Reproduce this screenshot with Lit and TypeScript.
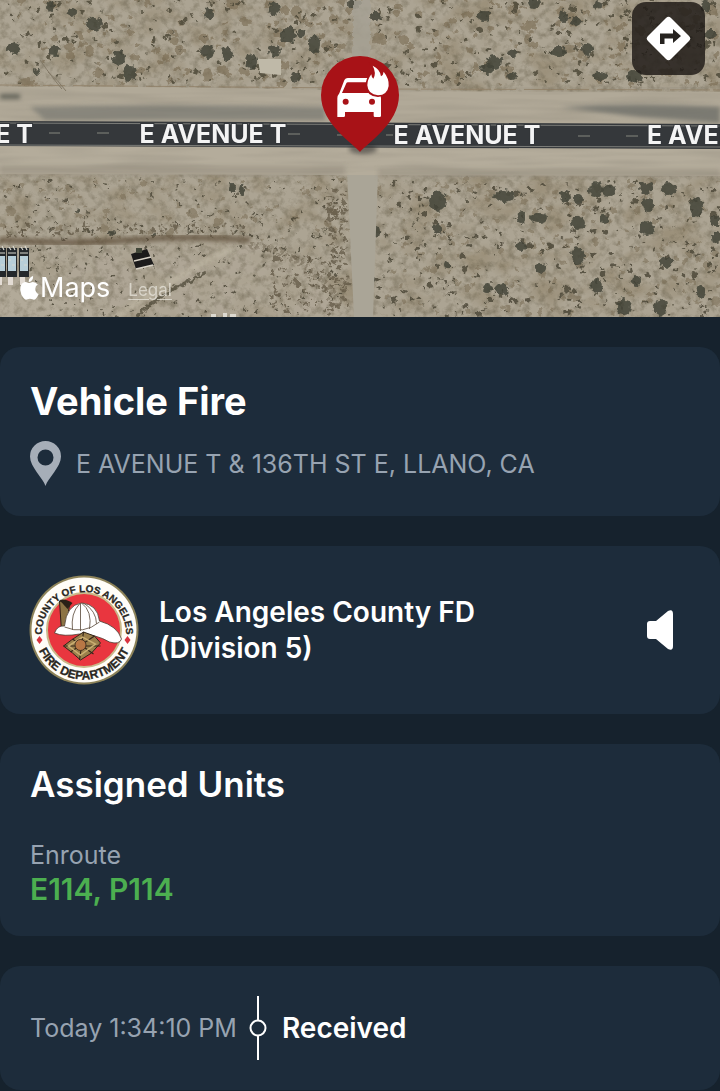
import { LitElement, html, svg, css } from "lit";
import { customElement, property } from "lit/decorators.js";

/** Small deterministic generator, so that the terrain is the same on every load. */
function seeded(seed: number) {
  let s = seed;
  return () => {
    s = (s * 1664525 + 1013904223) % 4294967296;
    return s / 4294967296;
  };
}

type Area = [x: number, y: number, w: number, h: number];

/** One path holding many little irregular blobs scattered over an area. */
function scatter(seed: number, count: number, [x, y, w, h]: Area, min: number, max: number) {
  const rnd = seeded(seed);
  let d = "";
  for (let i = 0; i < count; i++) {
    const px = x + rnd() * w;
    const py = y + rnd() * h;
    const r = min + rnd() * rnd() * (max - min);
    const k = 0.6 + rnd() * 0.5;
    d += `M${(px - r).toFixed(1)} ${py.toFixed(1)}q${(r * 0.2).toFixed(1)} ${(-r * k).toFixed(1)} ${r.toFixed(1)} ${(-r * k).toFixed(1)}t${r.toFixed(1)} ${(r * k).toFixed(1)}q${(-r * 0.3).toFixed(1)} ${(r * k).toFixed(1)} ${(-r).toFixed(1)} ${(r * k * 0.9).toFixed(1)}t${(-r).toFixed(1)} ${(-r * k * 0.9).toFixed(1)}z`;
  }
  return d;
}

const NORTH_WEST: Area = [0, 0, 350, 84];
const NORTH_EAST: Area = [372, 0, 348, 86];
const SOUTH_WEST: Area = [0, 178, 348, 62];
const YARD: Area = [30, 245, 310, 72];
const SOUTH_EAST: Area = [374, 180, 346, 137];

/* x, y, rx, ry of the large bushes */
const BUSHES = [
  [50, 6, 4, 5], [72, 12, 5, 5], [94, 24, 8, 7], [14, 48, 7, 6], [54, 51, 6, 5], [119, 58, 6, 7], [130, 73, 7, 8],
  [209, 14, 5, 6], [208, 52, 6, 7], [227, 54, 6, 7], [274, 9, 6, 7], [288, 35, 8, 8], [301, 33, 4, 4], [314, 44, 6, 10],
  [275, 51, 6, 5], [252, 62, 6, 8], [354, 4, 6, 5], [296, 77, 5, 5], [37, 71, 3, 3], [376, 16, 5, 5], [484, 16, 6, 5],
  [534, 3, 6, 5], [564, 16, 5, 6], [576, 21, 5, 5], [587, 49, 6, 6], [494, 62, 8, 7], [487, 69, 7, 5], [513, 53, 5, 4],
  [558, 52, 8, 5], [600, 76, 8, 4], [634, 76, 8, 6], [598, 5, 4, 4], [710, 34, 6, 5], [512, 76, 5, 4], [706, 6, 5, 6],
  [438, 201, 9, 10], [504, 196, 10, 6], [565, 197, 5, 6], [578, 199, 5, 5], [596, 190, 7, 8], [609, 191, 7, 6],
  [646, 188, 7, 6], [668, 189, 8, 6], [697, 207, 7, 10], [648, 204, 6, 7], [521, 218, 5, 6], [539, 218, 9, 5],
  [578, 223, 7, 6], [604, 219, 4, 4], [647, 228, 7, 7], [437, 229, 4, 5], [376, 232, 4, 7], [521, 246, 5, 5],
  [578, 256, 7, 9], [666, 262, 7, 5], [541, 268, 5, 5], [447, 264, 3, 4], [596, 286, 6, 7], [636, 281, 5, 5],
  [701, 292, 5, 6], [624, 307, 7, 8], [660, 308, 7, 8], [502, 289, 7, 6], [488, 288, 5, 4], [372, 280, 3, 4],
  [715, 221, 5, 5], [717, 237, 4, 6], [112, 233, 3, 3], [78, 210, 2, 2], [232, 188, 4, 4], [242, 190, 3, 5], [154, 235, 2, 2],
];

@customElement("incident-map")
export class IncidentMap extends LitElement {
  static styles = css`
    :host { display: block; position: relative; height: 317px; overflow: hidden; background: #a39b89; }
    .terrain { display: block; width: 100%; height: 100%; }
    .terrain filter { color-interpolation-filters: sRGB; }
    .street { font: 700 25px Inter, "Liberation Sans", sans-serif; fill: #f4f4f4; stroke: #33363a; stroke-width: 2px; paint-order: stroke; }
    .directions {
      position: absolute; top: 2px; right: 15px; width: 73px; height: 73px; padding: 0; border: 0;
      border-radius: 14px; background: rgba(32, 28, 24, 0.84); cursor: pointer;
    }
    .directions svg { display: block; width: 45px; height: 45px; margin: auto; }
    .credit { position: absolute; left: 20px; bottom: 12px; display: flex; align-items: center; color: #fff; }
    .apple { width: 19px; height: 24px; margin-right: 1px; }
    .maps { font-size: 27px; line-height: 34px; }
    .legal { margin: 4px 0 0 18px; font-size: 17px; line-height: 20px; color: rgba(235, 232, 224, 0.7); text-underline-offset: 3px; }
  `;

  render() {
    return html`
      <svg class="terrain" viewBox="0 0 720 317" preserveAspectRatio="xMidYMid slice" role="img" aria-label="Satellite map of E Avenue T">
        <defs>
          <filter id="sand" x="0" y="0" width="100%" height="100%">
            <feTurbulence type="fractalNoise" baseFrequency="0.13" numOctaves="4" seed="7" />
            <feColorMatrix values="0 0 0 0 0.4  0 0 0 0 0.37  0 0 0 0 0.29  2.6 0 0 0 -1.15" />
          </filter>
          <filter id="patches" x="0" y="0" width="100%" height="100%">
            <feTurbulence type="fractalNoise" baseFrequency="0.03 0.04" numOctaves="3" seed="21" />
            <feColorMatrix values="0 0 0 0 0.52  0 0 0 0 0.46  0 0 0 0 0.35  0 3 0 0 -1.35" />
          </filter>
          <filter id="grain" x="0" y="0" width="100%" height="100%">
            <feTurbulence type="fractalNoise" baseFrequency="0.01 0.14" numOctaves="2" seed="4" />
            <feColorMatrix values="0 0 0 0 0.5  0 0 0 0 0.48  0 0 0 0 0.43  1.6 0 0 0 -0.65" />
          </filter>
          <filter id="rough" x="-5%" y="-5%" width="110%" height="110%">
            <feTurbulence type="fractalNoise" baseFrequency="0.2" numOctaves="2" seed="3" />
            <feDisplacementMap in="SourceGraphic" scale="7" xChannelSelector="R" yChannelSelector="G" />
            <feGaussianBlur stdDeviation="0.7" />
          </filter>
          <filter id="soft" x="-10%" y="-50%" width="120%" height="200%"><feGaussianBlur stdDeviation="2" /></filter>
        </defs>

        <rect width="720" height="317" fill="#aca493" />
        <rect width="720" height="317" filter="url(#patches)" opacity="0.4" />
        <g filter="url(#soft)">
          <path d="M0 248 Q60 243 110 244 T250 240 Q320 250 346 317 H0Z" fill="#b1a998" opacity="0.6" />
          <path d="M0 317 V278 Q60 300 120 317Z" fill="#b2aa99" />
        </g>
        <rect width="720" height="317" filter="url(#sand)" opacity="0.45" />
        <g filter="url(#rough)">
          <path d=${scatter(11, 130, NORTH_WEST, 2, 7) + scatter(12, 140, NORTH_EAST, 2, 7)} fill="#74664d" opacity="0.55" />
          <path d=${scatter(13, 110, SOUTH_WEST, 1, 6) + scatter(14, 190, SOUTH_EAST, 2, 5)} fill="#7a6e56" opacity="0.55" />
          <path d=${scatter(15, 170, NORTH_WEST, 1, 4) + scatter(16, 200, NORTH_EAST, 1, 4)} fill="#4f4a39" opacity="0.85" />
          <path d=${scatter(17, 150, SOUTH_WEST, 1, 2) + scatter(22, 170, YARD, 1, 2) + scatter(18, 330, SOUTH_EAST, 1, 4)} fill="#4d4939" opacity="0.85" />
          <path d=${scatter(19, 110, [328, 190, 20, 120], 1, 4) + scatter(23, 90, [270, 255, 65, 60], 1, 4) + scatter(24, 90, [0, 224, 250, 12], 1, 3)} fill="#5c5340" opacity="0.7" />
          ${BUSHES.map(([x, y, rx, ry]) => svg`<ellipse cx=${x} cy=${y} rx=${rx} ry=${ry} fill="#434438" opacity="0.85" />`)}
        </g>

        <path d="M0 240 Q70 245 130 240 T250 240" fill="none" stroke="#5f4f3b" stroke-width="6" opacity="0.75" filter="url(#soft)" />
        <path d="M250 245 Q305 250 342 305" fill="none" stroke="#6f6451" stroke-width="7" stroke-dasharray="3 3" opacity="0.5" filter="url(#rough)" />
        <path d="M118 317 Q160 285 232 248" fill="none" stroke="#c3bba8" stroke-width="5" opacity="0.7" filter="url(#soft)" />
        <path d="M136 317 Q150 300 205 273" fill="none" stroke="#484332" stroke-width="3" opacity="0.7" filter="url(#rough)" />

        <rect x="353" y="0" width="17" height="100" fill="#a6a294" opacity="0.85" filter="url(#rough)" />
        <path d="M347 172 L378 172 L373 317 H354Z" fill="#aaa597" />
        <path d="M0 87 Q180 86 360 91 L720 92 V126 H0Z" fill="#b1a998" />
        <path d="M0 143 L720 146 V176 L0 174Z" fill="#b4ac9b" />
        <rect y="87" width="720" height="90" filter="url(#grain)" opacity="0.35" />
        <g filter="url(#soft)">
          <path d="M30 107 Q180 103 325 107 V120 H45Z" fill="#777871" opacity="0.7" />
          <path d="M560 107 Q640 102 720 107 V123 L640 117Z" fill="#696b66" opacity="0.75" />
          <path d="M0 94 H20 V99 H0Z" fill="#64645a" />
          <path d="M0 166 H345 V175 H0Z M378 169 H720 V177 H378Z" fill="#8b8576" opacity="0.4" />
        </g>
        <path d="M0 85 L350 88 M378 89 L720 90" stroke="#8f7e65" stroke-width="1" stroke-dasharray="40 3 22 8" opacity="0.8" />
        <path d="M0 121 L720 124 V149 L0 146Z" fill="#35383b" />
        <path d="M0 123 L720 126 M0 145 L720 147" stroke="#7b7c78" stroke-width="1" />
        <path d="M49 133 H60 M97 133 H109 M288 134 H300 M337 135 H345 M386 135 H393 M578 136 H590 M626 136 H638" stroke="#85867f" stroke-width="1" />

        <path d="M258 59 H281 V75 L260 73Z" fill="#bfb9a8" />
        <path d="M48 72 Q58 80 66 91 M40 60 Q54 80 62 89" fill="none" stroke="#827967" stroke-width="1" />
        <g>
          <path d="M131 254 L147 249 L154 265 L136 269Z" fill="#1c1b1b" />
          <path d="M134 261 L151 257 M136 269 L153 265" stroke="#d9d3c7" stroke-width="1.5" />
          <path d="M136 248 H142 V253 H136Z" fill="#424739" />
          ${[1, 12, 24].map((x) => svg`<g>
            <rect x=${x - 5} y="248" width="10" height="29" fill="#24282b" />
            <rect x=${x - 4} y="256" width="8" height="15" fill="#b7ced8" />
            <path d=${`M${x - 3} 247 l2 3 m2 -4 l2 4 M${x - 4} 253 h8 M${x - 3} 260 h2 m1 5 h3`} stroke="#d8d8d0" stroke-width="1.2" />
            <rect x=${x - 4} y="277" width="5" height="8" fill="#e3dcd4" />
          </g>`)}
          <path d="M211 314 h5 v3 h-5Z M223 313 h4 v4 h-4Z M230 314 h6 v3 h-6Z" fill="#dcd9d0" />
        </g>

        <text class="street" x="33" y="143" text-anchor="end">E AVENUE T</text>
        <text class="street" x="213" y="143" text-anchor="middle">E AVENUE T</text>
        <text class="street" x="467" y="144" text-anchor="middle">E AVENUE T</text>
        <text class="street" x="647" y="144">E AVENUE T</text>

        <ellipse cx="363" cy="149" rx="14" ry="5" fill="#222" opacity="0.5" filter="url(#soft)" />
        <path d="M360 152 C353 143 321 124 321 95 A39 39 0 0 1 399 95 C399 124 367 143 360 152Z" fill="#a81217" />
        <g transform="translate(310 45) scale(0.3333)">
          <path d="M82 216 V160 Q82 152 88 145 L102 108 Q105 99 114 99 H182 Q191 99 194 108 L206 145 Q213 152 213 160 V212 Q213 216 209 216 H195 Q191 216 191 212 V201 H105 V212 Q105 216 101 216Z" fill="#fff" />
          <path d="M96 144 L109 115 Q110 112 114 112 H182 L197 144Z" fill="#a81217" />
          <circle cx="107" cy="170" r="9" fill="#a81217" />
          <circle cx="186" cy="170" r="9" fill="#a81217" />
          <path d="M188 62 Q210 72 213 94 Q220 91 221 80 Q238 101 236 123 Q232 150 204 151 Q174 149 172 121 Q172 104 184 88 Q185 99 190 101 Q200 84 188 62Z" fill="#fff" stroke="#a81217" stroke-width="10" paint-order="stroke" />
        </g>
      </svg>
      <button class="directions" aria-label="Directions">
        <svg viewBox="0 0 45 45">
          <path d="M20 2 Q22.500 -0.500 25 2 L43 20 Q45.500 22.500 43 25 L25 43 Q22.500 45.500 20 43 L2 25 Q-0.500 22.500 2 20Z" fill="#fff" />
          <path d="M14 28 V17.500 H27 V13 L35 20 L27 27 V22.500 H18.500 V28Z" fill="#25221f" />
        </svg>
      </button>
      <div class="credit">
        <svg class="apple" viewBox="0 0 19 24" aria-hidden="true">
          <path d="M13 0 Q13.400 2.500 12 4.300 T8.800 6 Q8.500 3.600 9.900 2 T13 0Z M9.600 7 Q10.800 6.300 12.900 5.900 Q16 5.900 17.800 8.400 Q15.200 10 15.300 13 Q15.400 16.600 18.600 18 Q17.500 21 15.800 22.800 Q14.300 24.300 12.300 23.200 Q9.900 22.200 7.600 23.200 Q5.400 24.500 3.700 22.300 Q0.700 18.900 0.300 14.300 Q-0.100 8.200 4.200 6.300 Q5.700 5.700 7.300 6.400 Q9 7.200 9.600 7Z" fill="#fff" />
        </svg>
        <span class="maps">Maps</span>
        <a class="legal" href="#legal">Legal</a>
      </div>
    `;
  }
}

@customElement("department-seal")
export class DepartmentSeal extends LitElement {
  static styles = css`
    :host { display: block; flex: none; width: 110px; height: 110px; }
    .seal { display: block; width: 100%; height: 100%; }
    .ring { font: 700 10px "Liberation Sans", Arial, sans-serif; fill: #2a2722; stroke: #2a2722; stroke-width: 0.3px; }
    .lower { font-size: 12px; }
  `;

  render() {
    return html`
      <svg class="seal" viewBox="9.500 10 110 110" role="img" aria-label="County of Los Angeles Fire Department seal">
        <defs>
          <path id="upper" d="M22.500 69 A42 42 0 1 1 106.500 69" />
          <path id="lower" d="M15 65 A49.500 49.500 0 0 0 114 65" />
        </defs>
        <circle cx="64.500" cy="65" r="54.500" fill="#8d8359" />
        <circle cx="64.500" cy="65" r="52.500" fill="#fffdf8" />
        <circle cx="64.500" cy="65" r="37" fill="#e9363f" stroke="#c9b98a" stroke-width="2" />
        <text class="ring" text-anchor="middle"><textPath href="#upper" startOffset="50%">COUNTY OF LOS ANGELES</textPath></text>
        <text class="ring lower" text-anchor="middle"><textPath href="#lower" startOffset="50%">FIRE DEPARTMENT</textPath></text>
        <path d="M20 71 l3 4 -3 4 -3 -4Z M108 71 l3 4 -3 4 -3 -4Z" fill="#d8343f" />
        <path d="M40 36 L50 39 L47 62 L42 66Z" fill="#8c7445" stroke="#2a2117" stroke-width="1" />
        <path d="M40 35 Q46 33 53 38 L48 44Z" fill="#2a2117" />
        <path d="M35 68 Q38 60 45 61 Q47 40 62 38 Q78 39 80 56 Q98 61 102 74 Q100 80 90 77 Q76 69 60 69 Q44 72 35 68Z" fill="#fff" stroke="#4a3c31" stroke-width="0.8" />
        <path d="M45 62 Q64 70 80 57 M60 39 Q51 48 53 65 M61 38 V66 M62 38 Q73 46 70 64 M64 38 Q77 46 77 59" fill="none" stroke="#6a5b4d" stroke-width="0.9" />
        <path d="M52 75 L64 67 L75 71 L81 78 L72 88 L61 95 L53 88 L44 81Z" fill="#9a7f4b" stroke="#32261a" stroke-width="1" />
        <path d="M53 74 L74 89 M75 71 L51 87 M64 67 L60 95 M44 81 H81" stroke="#32261a" stroke-width="1.200" />
        <path d="M49 81 L63 72 L76 79 L61 90Z" fill="none" stroke="#c9ae72" stroke-width="1.500" />
        <circle cx="61" cy="80" r="5.500" fill="#b87745" stroke="#32261a" stroke-width="0.8" />
      </svg>
    `;
  }
}

@customElement("app-root")
export class AppRoot extends LitElement {
  @property() incident = "Vehicle Fire";
  @property() address = "E AVENUE T & 136TH ST E, LLANO, CA";
  @property({ attribute: false }) units = ["E114", "P114"];

  static styles = css`
    :host {
      display: block; min-height: 100vh; background: #16222d; color: #fff;
      font-family: Inter, "Liberation Sans", sans-serif;
    }
    .cards { display: flex; flex-direction: column; gap: 30px; padding: 30px 0 1px; }
    .card { padding: 30px; border-radius: 20px; background: #1d2c3b; }
    h1, h2, p { margin: 0; }
    h1, h2 { line-height: 48px; }
    h1 { font-size: 38px; font-weight: 700; }
    h2 { font-size: 35px; font-weight: 600; }
    .muted { color: #97a3b1; font-size: 25px; line-height: 34px; }
    .address { display: flex; align-items: center; gap: 15px; margin-top: 16px; }
    .pin { flex: none; width: 31px; height: 45px; }
    .agency { display: flex; align-items: center; gap: 20px; padding: 29px; }
    .name { flex: 1; font-size: 28px; font-weight: 600; line-height: 36px; }
    .division { display: block; }
    .sound { flex: none; padding: 0; border: 0; background: none; cursor: pointer; margin-right: 17px; }
    .sound svg { display: block; width: 28px; height: 42px; }
    .assigned { padding-top: 16px; }
    .status { margin-top: 30px; }
    .units { font-size: 30px; font-weight: 600; line-height: 34px; color: #4caf50; }
    .event { display: flex; align-items: center; }
    .mark { flex: none; width: 18px; height: 64px; margin: 0 15px 0 12px; }
    .stage { font-size: 28px; font-weight: 600; line-height: 34px; }
  `;

  render() {
    return html`
      <incident-map></incident-map>
      <main class="cards">
        <section class="card">
          <h1>${this.incident}</h1>
          <div class="address">
            <svg class="pin" viewBox="0 0 31 45" aria-hidden="true">
              <path fill-rule="evenodd" d="M15.500 45 C13 37 0 26 0 15.500 A15.500 15.500 0 0 1 31 15.500 C31 26 18 37 15.500 45Z M15.500 8.500 A8 8 0 1 0 15.500 24.500 A8 8 0 1 0 15.500 8.500Z" fill="#a6aeb8" />
            </svg>
            <span class="muted">${this.address}</span>
          </div>
        </section>
        <section class="card agency">
          <department-seal></department-seal>
          <p class="name">Los Angeles County FD <span class="division">(Division 5)</span></p>
          <button class="sound" aria-label="Listen">
            <svg viewBox="0 0 28 42"><path d="M4 12 H10 L22 2 Q27 -0.500 27 5 V37 Q27 42.500 22 40 L10 30 H4 Q1 30 1 27 V15 Q1 12 4 12Z" fill="#fff" /></svg>
          </button>
        </section>
        <section class="card assigned">
          <h2>Assigned Units</h2>
          <p class="muted status">Enroute</p>
          <p class="units">${this.units.join(", ")}</p>
        </section>
        <section class="card event">
          <time class="muted">Today 1:34:10 PM</time>
          <svg class="mark" viewBox="0 0 18 64" aria-hidden="true">
            <path d="M9 0 V24 M9 40 V64" stroke="#fff" stroke-width="2" />
            <circle cx="9" cy="32" r="7.500" fill="none" stroke="#fff" stroke-width="2" />
          </svg>
          <span class="stage">Received</span>
        </section>
      </main>
    `;
  }
}
